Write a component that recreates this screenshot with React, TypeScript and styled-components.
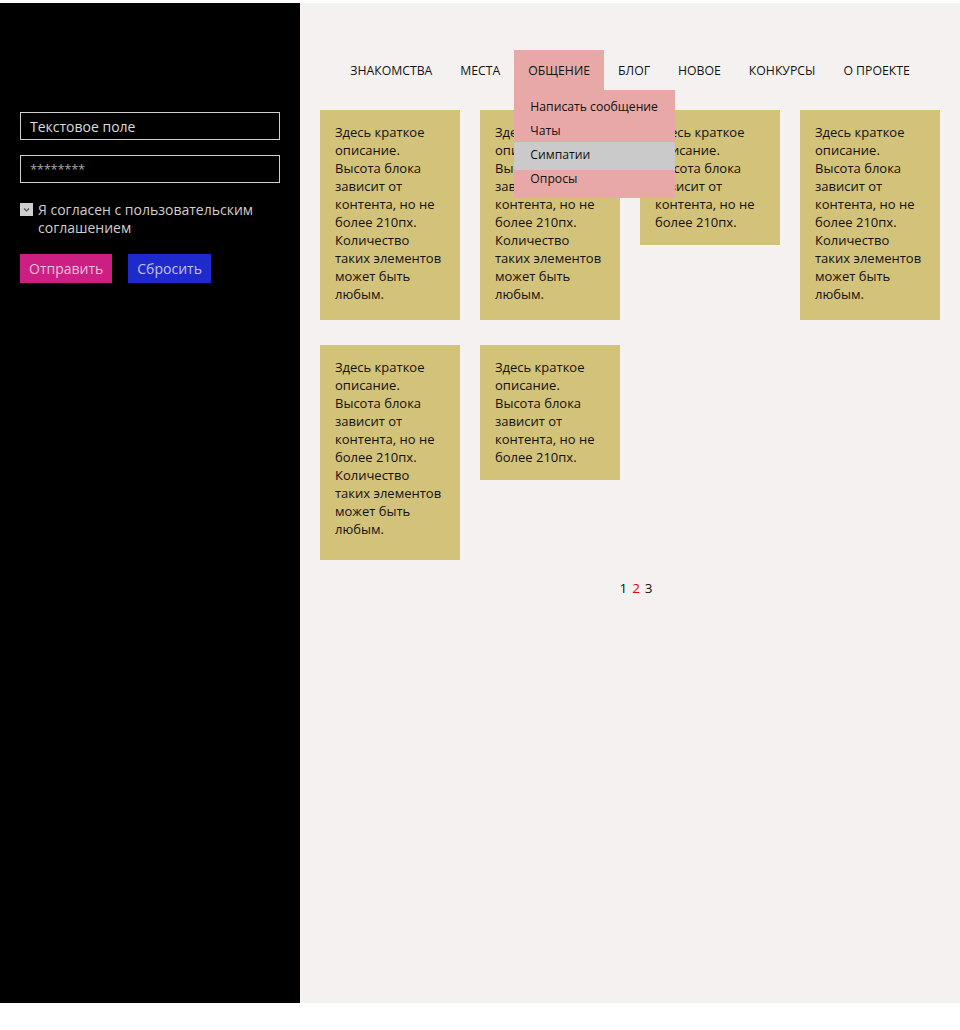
import React from "react"
import styled, { createGlobalStyle } from "styled-components"

const GlobalStyle = createGlobalStyle`
  body {
    margin: 3px 0 0;
    background: #fff;
    font-family: "Open Sans", "Noto Sans", sans-serif;
  }
  * {
    box-sizing: border-box;
  }
`

const navItems = ["Знакомства", "Места", "Общение", "Блог", "Новое", "Конкурсы", "О проекте"]
const subItems = ["Написать сообщение", "Чаты", "Симпатии", "Опросы"]

const longText = [
  "Здесь краткое",
  "описание.",
  "Высота блока",
  "зависит от",
  "контента, но не",
  "более 210пх.",
  "Количество",
  "таких элементов",
  "может быть",
  "любым.",
]
const shortText = longText.slice(0, 6)

const cards = [
  { lines: longText, pb: 16 },
  { lines: longText, pb: 16 },
  { lines: shortText, pb: 13 },
  { lines: longText, pb: 16 },
  { lines: longText, pb: 21 },
  { lines: shortText, pb: 13 },
]

export default function App() {
  return (
    <>
      <GlobalStyle />
      <Page>
        <Sidebar>
          <Form>
            <Input defaultValue="Текстовое поле" />
            <Input defaultValue="********" $masked />
            <CheckRow>
              <CheckBox>
                <svg width="9" height="9" viewBox="0 0 9 9">
                  <path d="M2 3.5 L4.5 6 L7 3.5" stroke="#555" strokeWidth="1.2" fill="none" />
                </svg>
              </CheckBox>
              <CheckLabel>Я согласен с пользовательским соглашением</CheckLabel>
            </CheckRow>
            <Buttons>
              <Button type="button" $bg="#cc1f84">Отправить</Button>
              <Button type="button" $bg="#1f2acc">Сбросить</Button>
            </Buttons>
          </Form>
        </Sidebar>
        <Main>
          <Nav>
            {navItems.map((item) => (
              <NavItem key={item} $active={item === "Общение"}>
                {item}
                {item === "Общение" && (
                  <Dropdown>
                    {subItems.map((sub) => (
                      <DropItem key={sub} $active={sub === "Симпатии"}>
                        {sub}
                      </DropItem>
                    ))}
                  </Dropdown>
                )}
              </NavItem>
            ))}
          </Nav>
          <Grid>
            {cards.map((card, i) => (
              <Card key={i} $pb={card.pb}>
                {card.lines.map((line) => (
                  <div key={line}>{line}</div>
                ))}
              </Card>
            ))}
          </Grid>
          <Pagination>
            <PageNum>1</PageNum>
            <PageNum $current>2</PageNum>
            <PageNum>3</PageNum>
          </Pagination>
        </Main>
      </Page>
    </>
  )
}

const Page = styled.div`
  display: flex;
  width: 960px;
  height: 1000px;
`

const Sidebar = styled.aside`
  width: 300px;
  flex-shrink: 0;
  background: #000;
  padding: 109px 20px 0;
`

const Form = styled.form`
  display: flex;
  flex-direction: column;
`

const Input = styled.input<{ $masked?: boolean }>`
  width: 260px;
  height: 28px;
  margin: 0 0 15px;
  padding: 0 9px;
  background: #000;
  border: 1px solid #cfcfcf;
  color: ${({ $masked }) => ($masked ? "#a8a8a8" : "#dcdcdc")};
  font-family: "Open Sans", sans-serif;
  font-size: ${({ $masked }) => ($masked ? "13px" : "14px")};
  letter-spacing: ${({ $masked }) => ($masked ? "-0.3px" : "0")};
  outline: none;
`

const CheckRow = styled.div`
  display: flex;
  align-items: flex-start;
  gap: 5px;
  margin-top: 3px;
`

const CheckBox = styled.span`
  display: flex;
  align-items: center;
  justify-content: center;
  width: 13px;
  height: 13px;
  margin-top: 2px;
  flex-shrink: 0;
  background: #cfcfcf;
`

const CheckLabel = styled.span`
  color: #cfcfcf;
  font-size: 14px;
  line-height: 18px;
  width: 230px;
`

const Buttons = styled.div`
  display: flex;
  gap: 16px;
  margin-top: 17px;
`

const Button = styled.button<{ $bg: string }>`
  height: 29px;
  padding: 0 9px;
  border: none;
  background: ${({ $bg }) => $bg};
  color: rgba(232, 232, 232, 0.82);
  font-family: "Open Sans", sans-serif;
  font-size: 14px;
  cursor: pointer;
`

const Main = styled.main`
  flex: 1;
  background: #f5f1f0;
  padding: 47px 20px 0;
`

const Nav = styled.nav`
  display: flex;
  justify-content: center;
  height: 40px;
`

const NavItem = styled.div<{ $active?: boolean }>`
  position: relative;
  display: flex;
  align-items: center;
  padding: 0 14px;
  font-size: 12.25px;
  text-transform: uppercase;
  color: #111;
  background: ${({ $active }) => ($active ? "#e8a8a8" : "transparent")};
  cursor: pointer;
`

const Dropdown = styled.div`
  position: absolute;
  top: 40px;
  left: 0;
  width: 161px;
  padding: 5px 0 7px;
  background: #e8a8a8;
  text-transform: none;
  z-index: 2;
`

const DropItem = styled.div<{ $active?: boolean }>`
  line-height: 24px;
  font-size: 12.2px;
  padding: ${({ $active }) => ($active ? "1px 16px 3px" : "0 16px")};
  margin: ${({ $active }) => ($active ? "-1px 0 -3px" : "0")};
  background: ${({ $active }) => ($active ? "#cacaca" : "transparent")};
  color: #111;
  white-space: nowrap;
`

const Grid = styled.div`
  display: grid;
  grid-template-columns: repeat(4, 140px);
  column-gap: 20px;
  row-gap: 25px;
  align-items: start;
  margin-top: 20px;
`

const Card = styled.div<{ $pb: number }>`
  background: #d3c27a;
  padding: 13px 15px ${({ $pb }) => $pb + 1}px;
  font-size: 13px;
  line-height: 18px;
  color: #111;
  white-space: nowrap;
`

const Pagination = styled.div`
  display: flex;
  justify-content: center;
  gap: 5px;
  margin: 19px 0 0 12px;
  font-size: 13.5px;
  line-height: 18px;
`

const PageNum = styled.span<{ $current?: boolean }>`
  color: ${({ $current }) => ($current ? "#e60000" : "#111")};
`
